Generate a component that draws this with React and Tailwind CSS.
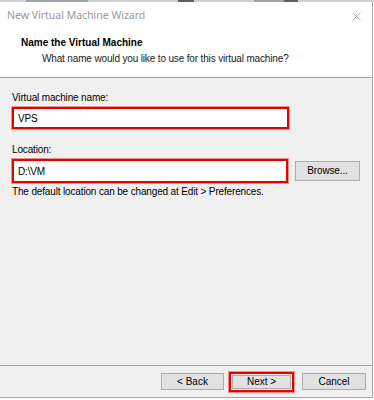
import { X } from 'lucide-react';

const body = { fontFamily: '"Liberation Sans", Arial, sans-serif' };

function Button({ children, className = '' }) {
  return (
    <button
      className={`h-[17px] bg-[#e1e1e1] border border-[#adadad] text-[10px] text-black leading-none flex items-center justify-center ${className}`}
      style={body}
    >
      {children}
    </button>
  );
}

export default function App() {
  return (
    <div className="w-[374px] h-[400px] bg-white overflow-hidden">
      <div className="h-[2px] bg-[#cfd2d4] flex">
        <div className="w-[26px]" />
        <div className="w-[62px] bg-[#9ea2a6]" />
        <div className="w-[90px]" />
        <div className="w-[16px] bg-[#5a6068]" />
        <div className="w-[60px]" />
        <div className="w-[30px] bg-[#9ea2a6]" />
        <div className="w-[14px] bg-[#5a6068]" />
      </div>
      <div className="w-[373px] h-[396px] border-r border-b border-[#a8a8a8] flex flex-col">
        <div className="h-[28px] flex items-center justify-between pl-[7px] pr-[8px]">
          <span className="text-[10.5px] text-[#9a9a9a]" style={{ fontFamily: '"Noto Sans", sans-serif' }}>
            New Virtual Machine Wizard
          </span>
          <X size={15} strokeWidth={1} className="text-[#8a8a8a]" />
        </div>
        <div className="h-[47px] pl-[21px] pt-[6px] tracking-[-0.15px]" style={body}>
          <div className="text-[10px] font-bold text-black leading-[13px] tracking-normal">Name the Virtual Machine</div>
          <div className="text-[10px] text-[#222] leading-[13px] pl-[21px] pt-[3px]">
            What name would you like to use for this virtual machine?
          </div>
        </div>
        <div className="h-px bg-[#a0a0a0]" />
        <div className="flex-1 bg-[#f0f0f0] px-[12px] pt-[13px] tracking-[-0.15px]" style={body}>
          <div className="text-[10px] text-black leading-[13px]">Virtual machine name:</div>
          <div className="mt-[3px] w-[277px] h-[22px] border-2 border-[#e60000] ring-1 ring-[#e60000]/40 bg-white flex items-center px-[4px] text-[10px] text-black">
            VPS
          </div>
          <div className="mt-[14px] text-[10px] text-black leading-[13px]">Location:</div>
          <div className="mt-[3px] flex items-center gap-[7px]">
            <div className="w-[276px] h-[24px] border-2 border-[#e60000] ring-1 ring-[#e60000]/40 bg-white flex items-center px-[4px] text-[10px] text-black">
              D:\VM
            </div>
            <Button className="w-[65px] h-[20px]">Browse...</Button>
          </div>
          <div className="mt-[2px] text-[10px] text-black leading-[13px]">
            The default location can be changed at Edit &gt; Preferences.
          </div>
        </div>
        <div className="h-px bg-[#a0a0a0]" />
        <div className="h-[31px] bg-[#f0f0f0] flex items-center justify-end pr-[6px]">
          <Button className="w-[63px]">&lt; Back</Button>
          <div className="ml-[5px] w-[65px] h-[20px] border-2 border-[#e60000] ring-1 ring-[#e60000]/40 p-[1px] flex">
            <Button className="w-full h-full">Next &gt;</Button>
          </div>
          <Button className="ml-[8px] w-[64px]">Cancel</Button>
        </div>
      </div>
    </div>
  );
}
